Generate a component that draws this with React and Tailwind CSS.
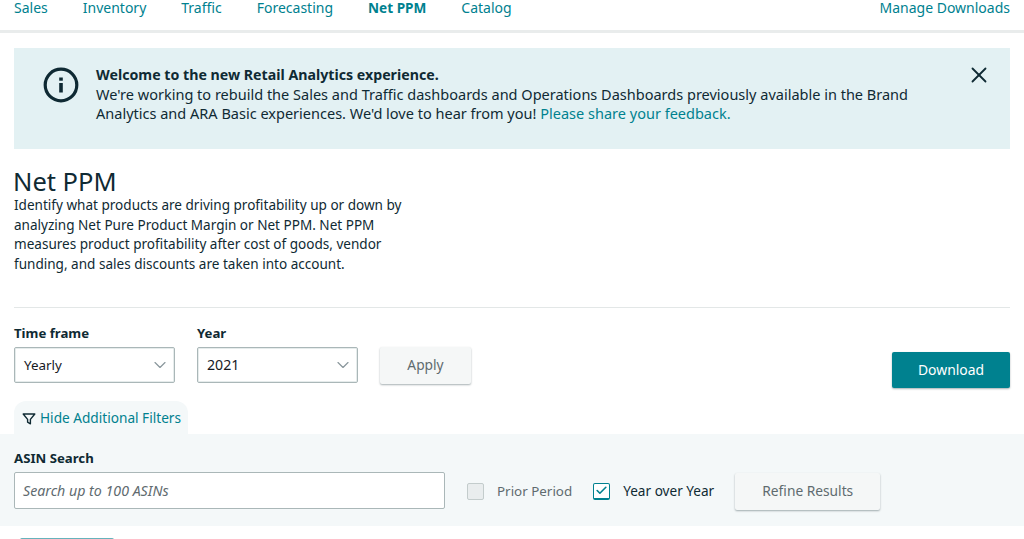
import React from "react";
import { ChevronDown, Check, X } from "lucide-react";

const navItems = ["Sales", "Inventory", "Traffic", "Forecasting", "Net PPM", "Catalog"];

function Select({ value, size }) {
  return (
    <div className="flex h-[36px] w-[161px] items-center justify-between rounded-[2px] border border-[#aab7b8] bg-white pl-[9px] pr-[4px] shadow-[inset_0_0_0_1px_#e6ecec]">
      <span className={`text-[#16191f] ${size}`}>{value}</span>
      <ChevronDown size={20} strokeWidth={1.4} className="text-[#8a979c]" />
    </div>
  );
}

function Btn({ children, className = "" }) {
  return (
    <button className={`flex h-[37px] items-center justify-center rounded-[2px] bg-[#f5f7f7] text-[13.75px] text-[#5f6b6f] shadow-[0_1px_2px_rgba(0,28,36,0.35)] ${className}`}>
      {children}
    </button>
  );
}

export default function App() {
  return (
    <div className="h-[539px] w-[1024px] overflow-hidden bg-white text-[14px] text-[#0f2a33]" style={{ fontFamily: '"Noto Sans", sans-serif' }}>
      <nav className="flex h-[33px] items-start justify-between border-b-[3px] border-[#e9ecec] px-[14px] leading-[16px] text-[#00818f]">
        <div className="flex gap-[35px]">
          {navItems.map((n) => (
            <span key={n} className={n === "Net PPM" ? "text-[13.6px] font-bold" : ""}>{n}</span>
          ))}
        </div>
        <span>Manage Downloads</span>
      </nav>

      <div className="px-[14px]">
        <section className="mt-[15px] flex h-[101px] bg-[#e3f1f3] pl-[29px] pr-[18px] pt-[17px] text-[14.52px]">
          <svg width="38" height="38" viewBox="0 0 38 38" className="mt-[1px] shrink-0" fill="none">
            <circle cx="18" cy="19" r="15.8" stroke="#0f2a33" strokeWidth="3.2" />
            <rect x="16.2" y="17" width="3.6" height="9.5" fill="#0f2a33" />
            <rect x="16.2" y="11.5" width="3.6" height="3.2" fill="#0f2a33" />
          </svg>
          <div className="ml-[15px] w-[830px] leading-[19.5px]">
            <div className="text-[14.2px] font-bold">Welcome to the new Retail Analytics experience.</div>
            <div>
              We're working to rebuild the Sales and Traffic dashboards and Operations Dashboards previously available in the Brand Analytics and ARA Basic experiences. We'd love to hear from you!{" "}
              <span className="text-[#00818f]">Please share your feedback.</span>
            </div>
          </div>
          <X size={26} strokeWidth={1.7} className="ml-auto -mt-[3px] shrink-0" />
        </section>

        <h1 className="mt-[16px] -ml-[1px] text-[25.5px] leading-[32px]">Net PPM</h1>
        <p className="-mt-[1px] w-[400px] text-[13.55px] leading-[19.5px]">
          Identify what products are driving profitability up or down by analyzing Net Pure Product Margin or Net PPM. Net PPM measures product profitability after cost of goods, vendor funding, and sales discounts are taken into account.
        </p>

        <hr className="mt-[33px] border-[#e3e7e7]" />

        <div className="mt-[16px] flex items-start">
          <div>
            <div className="text-[13.2px] font-bold leading-[19px]">Time frame</div>
            <div className="mt-[4px]"><Select value="Yearly" size="text-[13.4px]" /></div>
          </div>
          <div className="ml-[22px]">
            <div className="text-[13.2px] font-bold leading-[19px]">Year</div>
            <div className="mt-[4px]"><Select value="2021" size="text-[14.2px]" /></div>
          </div>
          <Btn className="ml-[22px] mt-[23px] w-[91px]">Apply</Btn>
          <button className="ml-auto mt-[28px] flex h-[36px] w-[118px] items-center justify-center rounded-[2px] bg-[#00818f] text-[13.9px] text-white shadow-[0_1px_2px_rgba(0,28,36,0.35)]">
            Download
          </button>
        </div>

        <div className="mt-[13px] flex h-[33px] w-[174px] items-center whitespace-nowrap rounded-t-[12px] bg-[#f4f8f9] pl-[8px] pt-[2px] text-[13.65px] text-[#00818f]">
          <svg width="14" height="14" viewBox="0 0 14 14" fill="none" stroke="#0f2a33" strokeWidth="1.4" strokeLinejoin="round" className="mr-[4px] shrink-0">
            <path d="M1.2 2h11.6L8.4 7.4v4.4l-2.8-1.6V7.4z" />
          </svg>
          Hide Additional Filters
        </div>
      </div>

      <section className="h-[92px] bg-[#f4f8f9] px-[14px] pt-[15px]">
        <div className="text-[13.2px] font-bold leading-[19px]">ASIN Search</div>
        <div className="mt-[4px] flex h-[38px] items-center">
          <div className="flex h-[37px] w-[431px] items-center self-start rounded-[2px] border border-[#aab7b8] bg-white pl-[8px] text-[14.2px] italic text-[#5f6b6f]">
            Search up to 100 ASINs
          </div>
          <span className="ml-[22px] h-[17px] w-[17px] rounded-[2px] border border-[#c3cccc] bg-[#e9edee]" />
          <span className="ml-[13px] text-[13.4px] text-[#5f6b6f]">Prior Period</span>
          <span className="ml-[21px] flex h-[17px] w-[17px] items-center justify-center rounded-[2px] border border-b-2 border-[#00818f] bg-white">
            <Check size={13} strokeWidth={3} className="text-[#00818f]" />
          </span>
          <span className="ml-[13px] text-[13.6px]">Year over Year</span>
          <Btn className="ml-[21px] w-[145px]">Refine Results</Btn>
        </div>
      </section>

      <div className="ml-[20px] mt-[12px] h-[2px] w-[94px] rounded-t-[4px] border-t border-[#66b3bc]" />
    </div>
  );
}
